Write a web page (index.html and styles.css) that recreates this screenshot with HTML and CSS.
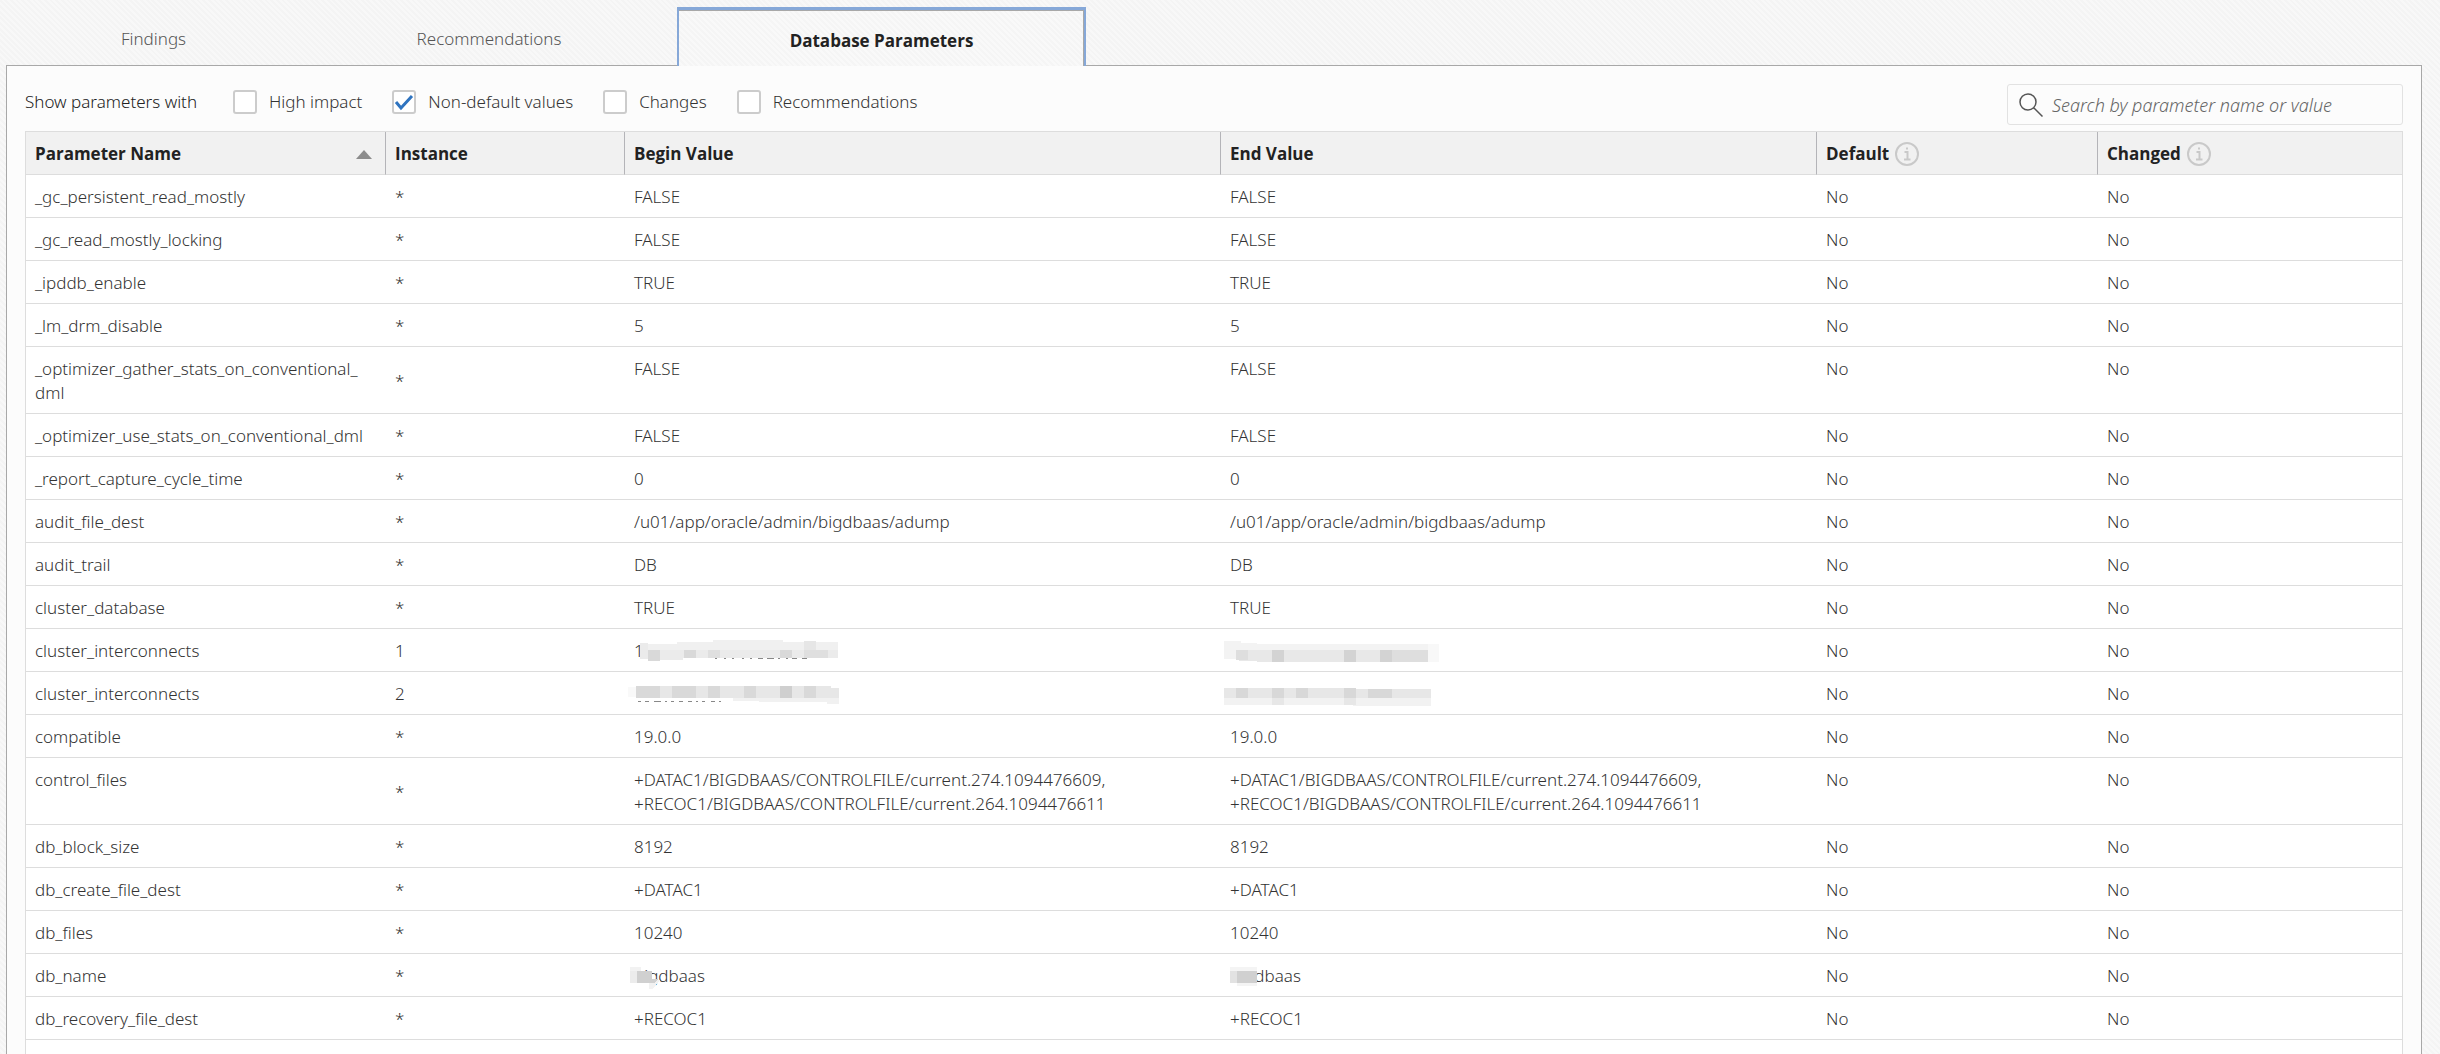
FILE: index.html
```html
<!DOCTYPE html>
<html lang="en">
<head>
<meta charset="utf-8">
<title>Database Parameters</title>
<link rel="stylesheet" href="styles.css">
</head>
<body>
<nav class="tabs" role="tablist">
  <button class="tab tab-first" role="tab" type="button">Findings</button>
  <button class="tab tab-second" role="tab" type="button">Recommendations</button>
  <button class="tab tab-active" role="tab" type="button" aria-selected="true">Database Parameters</button>
</nav>
<main class="panel">
  <div class="toolbar">
    <div class="filters">
      <span class="filters-title">Show parameters with</span>
      <label class="check"><input type="checkbox">High impact</label>
      <label class="check"><input type="checkbox" checked>Non-default values</label>
      <label class="check"><input type="checkbox">Changes</label>
      <label class="check"><input type="checkbox">Recommendations</label>
    </div>
    <div class="search">
      <svg class="search-icon" viewBox="0 0 24 24" aria-hidden="true"><circle cx="9" cy="9" r="8"/><path d="M15 15l8.500 8.500"/></svg>
      <input type="search" aria-label="Search parameters" placeholder="Search by parameter name or value">
    </div>
  </div>
  <div class="grid-frame">
  <table class="grid">
    <colgroup><col class="c-name"><col class="c-inst"><col class="c-value"><col class="c-value"><col class="c-default"><col></colgroup>
    <thead>
      <tr>
        <th><span class="sortable">Parameter Name<svg class="sort" viewBox="0 0 16 9" aria-hidden="true"><path d="M8 0l8 9H0z"/></svg></span></th>
        <th>Instance</th><th>Begin Value</th><th>End Value</th>
        <th><span class="with-info">Default<svg class="info" viewBox="0 0 24 24" aria-hidden="true"><circle cx="12" cy="12" r="11"/><path d="M9.500 10H12.500V17M9 17.500H15.500M11 6.500h2"/></svg></span></th>
        <th><span class="with-info">Changed<svg class="info" viewBox="0 0 24 24" aria-hidden="true"><circle cx="12" cy="12" r="11"/><path d="M9.500 10H12.500V17M9 17.500H15.500M11 6.500h2"/></svg></span></th>
      </tr>
    </thead>
    <tbody>
      <tr><td>_gc_persistent_read_mostly</td><td>*</td><td>FALSE</td><td>FALSE</td><td>No</td><td>No</td></tr>
      <tr><td>_gc_read_mostly_locking</td><td>*</td><td>FALSE</td><td>FALSE</td><td>No</td><td>No</td></tr>
      <tr><td>_ipddb_enable</td><td>*</td><td>TRUE</td><td>TRUE</td><td>No</td><td>No</td></tr>
      <tr><td>_lm_drm_disable</td><td>*</td><td>5</td><td>5</td><td>No</td><td>No</td></tr>
      <tr><td>_optimizer_gather_stats_on_conventional_<wbr>dml</td><td>*</td><td>FALSE</td><td>FALSE</td><td>No</td><td>No</td></tr>
      <tr><td>_optimizer_use_stats_on_conventional_dml</td><td>*</td><td>FALSE</td><td>FALSE</td><td>No</td><td>No</td></tr>
      <tr><td>_report_capture_cycle_time</td><td>*</td><td>0</td><td>0</td><td>No</td><td>No</td></tr>
      <tr><td>audit_file_dest</td><td>*</td><td>/u01/app/oracle/admin/bigdbaas/adump</td><td>/u01/app/oracle/admin/bigdbaas/adump</td><td>No</td><td>No</td></tr>
      <tr><td>audit_trail</td><td>*</td><td>DB</td><td>DB</td><td>No</td><td>No</td></tr>
      <tr><td>cluster_database</td><td>*</td><td>TRUE</td><td>TRUE</td><td>No</td><td>No</td></tr>
      <tr><td>cluster_interconnects</td><td>1</td>
        <td><span class="masked">1<svg class="mask" width="220" height="26" viewBox="0 0 220 26" shape-rendering="crispEdges" aria-hidden="true"><path fill="#f0f0f0" d="M17 5h37V3h36V1h70v2h55v9H17z"/><path fill="#ebebeb" d="M17 4h8v16h-8zM36 11h179v8H60v2H36z"/><path fill="#d9d9d9" d="M25 11h12v11H25zM61 11h12v8H61zM157 11h12v8h-12z"/><path fill="#dfdfdf" d="M85 11h12v8H85zM181 11h24v8h-24z"/><path fill="#e6e6e6" d="M181 2h12v9h-12z"/><path fill="#888" d="M92 19h2v1h-2zM101 19h2v1h-2zM109 19h2v1h-2zM119 19h2v1h-2zM127 19h2v1h-2zM135 19h5v1h-5zM144 19h7v1h-7zM155 19h2v1h-2zM163 19h2v1h-2zM169 19h5v1h-5zM179 19h5v1h-5z"/></svg></span></td>
        <td><span class="masked">&nbsp;<svg class="mask" width="220" height="26" viewBox="0 0 220 26" shape-rendering="crispEdges" aria-hidden="true"><path fill="#f3f3f3" d="M5 2h17v2h16v1h183v6H17v9H5z"/><path fill="#f8f8f8" d="M209 5h11v18h-11z"/><path fill="#e8e8e8" d="M17 11h192v12H38v-1H20v-1h-3z"/><path fill="#dedede" d="M17 11h12v10H17zM173 11h12v12h-12zM185 11h24v12h-24z"/><path fill="#d3d3d3" d="M53 11h12v12H53zM125 11h12v12h-12zM161 11h12v12h-12z"/></svg></span></td>
        <td>No</td><td>No</td></tr>
      <tr><td>cluster_interconnects</td><td>2</td>
        <td><span class="masked">&nbsp;<svg class="mask" width="220" height="26" viewBox="0 0 220 26" shape-rendering="crispEdges" aria-hidden="true"><path fill="#f1f1f1" d="M110 16h106v6h-12v-2h-68v-1h-26z"/><path fill="#f9f9f9" d="M5 5h8v10H5z"/><path fill="#e7e7e7" d="M13 4h195v2h8v10H13z"/><path fill="#d9d9d9" d="M13 4h24v12H13zM49 4h24v12H49zM85 4h12v12H85zM121 4h12v12h-12zM181 4h12v12h-12z"/><path fill="#cfcfcf" d="M157 4h12v12h-12z"/><path fill="#888" d="M15 19h3v1h-3zM22 19h4v1h-4zM31 19h7v1h-7zM42 19h2v1h-2zM48 19h3v1h-3zM56 19h4v1h-4zM65 19h4v1h-4zM73 19h2v1h-2zM79 19h3v1h-3zM88 19h4v1h-4zM96 19h2v1h-2z"/></svg></span></td>
        <td><span class="masked">&nbsp;<svg class="mask" width="220" height="26" viewBox="0 0 220 26" shape-rendering="crispEdges" aria-hidden="true"><path fill="#f2f2f2" d="M5 16h207v8h-78v-1H5z"/><path fill="#e7e7e7" d="M5 6h130v1h77v9H5zM53 16h12v7H53zM125 16h12v7h-12z"/><path fill="#d8d8d8" d="M17 6h12v10H17zM53 6h12v10H53zM77 6h12v10H77zM125 6h12v10h-12zM149 7h24v9h-24z"/></svg></span></td>
        <td>No</td><td>No</td></tr>
      <tr><td>compatible</td><td>*</td><td>19.0.0</td><td>19.0.0</td><td>No</td><td>No</td></tr>
      <tr><td>control_files</td><td>*</td><td>+DATAC1/BIGDBAAS/CONTROLFILE/current.274.1094476609,<br>+RECOC1/BIGDBAAS/CONTROLFILE/current.264.1094476611</td><td>+DATAC1/BIGDBAAS/CONTROLFILE/current.274.1094476609,<br>+RECOC1/BIGDBAAS/CONTROLFILE/current.264.1094476611</td><td>No</td><td>No</td></tr>
      <tr><td>db_block_size</td><td>*</td><td>8192</td><td>8192</td><td>No</td><td>No</td></tr>
      <tr><td>db_create_file_dest</td><td>*</td><td>+DATAC1</td><td>+DATAC1</td><td>No</td><td>No</td></tr>
      <tr><td>db_files</td><td>*</td><td>10240</td><td>10240</td><td>No</td><td>No</td></tr>
      <tr><td>db_name</td><td>*</td>
        <td><span class="masked">bigdbaas<svg class="mask" width="40" height="26" viewBox="0 0 40 26" shape-rendering="crispEdges" aria-hidden="true"><path fill="#f2f2f2" d="M7 3h11v4H7zM26 16h11l-7 9h-4z"/><path fill="#ececec" d="M7 7h7v12H7z"/><path fill="#d0d0d0" d="M14 7h15v8h6l-3 4H14z"/></svg></span></td>
        <td><span class="masked">bigdbaas<svg class="mask" width="40" height="26" viewBox="0 0 40 26" shape-rendering="crispEdges" aria-hidden="true"><path fill="#f4f4f4" d="M11 3h27v19H18v-3h-7z"/><path fill="#e2e2e2" d="M11 7h7v12h-7z"/><path fill="#d0d0d0" d="M18 7h20v12H18z"/></svg></span></td>
        <td>No</td><td>No</td></tr>
      <tr><td>db_recovery_file_dest</td><td>*</td><td>+RECOC1</td><td>+RECOC1</td><td>No</td><td>No</td></tr>
    </tbody>
  </table>
  </div>
</main>
</body>
</html>
```
FILE: styles.css
```css
* { box-sizing: border-box; }

body {
  margin: 0;
  min-height: 100vh;
  display: flex;
  flex-direction: column;
  padding: 7px 18px 0 6px;
  background: repeating-linear-gradient(45deg, #f4f4f4 0 2px, #f8f8f8 2px 4px);
  color: #333;
  font: 300 17px/24px "Noto Sans", "Open Sans", sans-serif;
}

.tabs { display: flex; }

.tab {
  height: 58px;
  padding: 5px 0 0;
  border: 0;
  background: none;
  color: #555;
  font: inherit;
}
.tab-first { width: 295px; }
.tab-second { width: 376px; }
.tab-active {
  position: relative;
  width: 409px;
  height: 59px;
  margin-bottom: -1px;
  border: 2px solid #86a8d8;
  border-top-width: 3px;
  border-bottom: 0;
  background: repeating-linear-gradient(45deg, #f5f5f5 0 2px, #f9f9f9 2px 4px);
  box-shadow: inset -1px 1px 0 #a8a8a8;
  color: #222;
  font-family: "Open Sans", "Noto Sans", sans-serif;
  font-weight: 700;
}

.panel {
  flex: 1;
  display: flex;
  flex-direction: column;
  padding: 17px 18px 0;
  border: 1px solid #a8a8a8;
  border-width: 1px 1px 0;
  background: #fcfcfc;
}

.toolbar {
  display: flex;
  justify-content: space-between;
  height: 48px;
}

.filters { display: flex; height: 38px; align-items: center; color: #333; }
.filters-title { width: 208px; color: #222; }
.check { display: flex; align-items: center; gap: 12px; margin-right: 30px; }

.check input {
  appearance: none;
  width: 24px;
  height: 24px;
  margin: 0;
  border: 2px solid #ccc;
  border-radius: 3px;
  background: #fff;
}
.check input:checked {
  background: #fff url("data:image/svg+xml,%3Csvg xmlns='http://www.w3.org/2000/svg' viewBox='0 0 20 20'%3E%3Cpath d='M2 10l5 6L18 4' fill='none' stroke='%232f74c0' stroke-width='3'/%3E%3C/svg%3E") center / 20px no-repeat;
}

.search {
  display: flex;
  align-items: center;
  gap: 9px;
  width: 396px;
  height: 41px;
  margin-top: 1px;
  padding: 0 11px;
  border: 1px solid #e2e2e2;
  border-radius: 3px;
}
.search-icon { width: 24px; height: 24px; flex: none; fill: none; stroke: #555; stroke-width: 1.5; }
.search input {
  flex: 1;
  min-width: 0;
  padding: 0;
  border: 0;
  outline: 0;
  background: none;
  font: inherit;
  font-size: 18px;
}
.search input::placeholder { color: #666; font-style: italic; }

.grid-frame {
  flex: 1;
  border: 1px solid #ddd;
  border-bottom: 0;
  background: #fff;
}
.grid {
  width: 100%;
  table-layout: fixed;
  border-collapse: separate;
  border-spacing: 0;
}
.c-name { width: 360px; }
.c-inst { width: 239px; }
.c-value { width: 596px; }
.c-default { width: 281px; }

.grid th {
  padding: 10px 9px 8px;
  border-right: 1px solid #b4b4b8;
  border-bottom: 1px solid #ddd;
  background: #f1f1f1;
  color: #222;
  font-family: "Open Sans", "Noto Sans", sans-serif;
  font-weight: 700;
  text-align: left;
}
.grid th:last-child { border-right: 0; }
.grid td {
  padding: 10px 9px 8px;
  border-bottom: 1px solid #ddd;
  vertical-align: top;
}
.grid td:nth-child(2) { vertical-align: middle; }

.sortable { display: flex; justify-content: space-between; align-items: center; }
.sort { width: 16px; height: 9px; margin-right: 4px; fill: #8c8c8c; }
.with-info { display: flex; align-items: center; gap: 6px; }
.info { width: 24px; height: 24px; fill: none; stroke: #c9c9c9; stroke-width: 2; }

.masked { position: relative; }
.mask { position: absolute; left: -11px; top: 0; }
```
